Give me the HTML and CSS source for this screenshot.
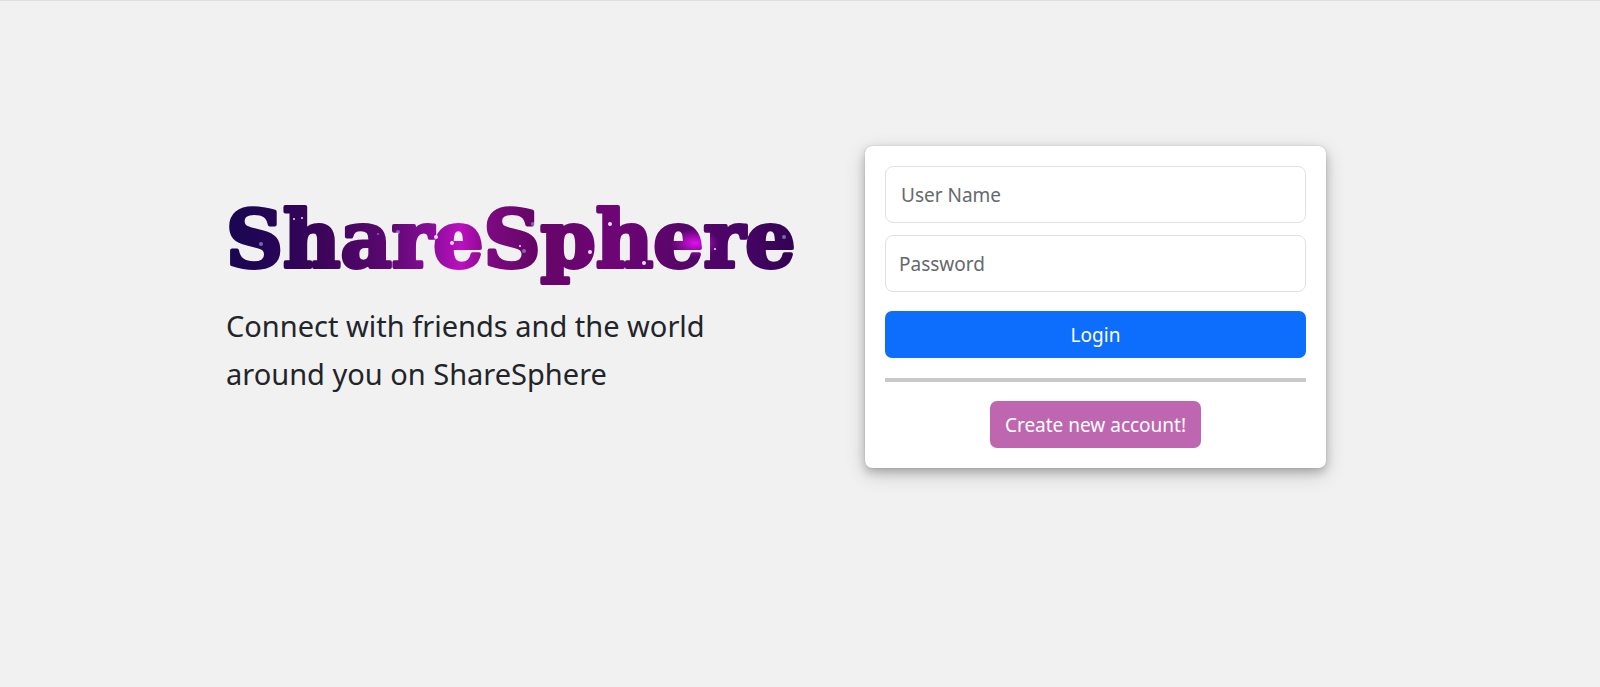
FILE: index.html
```html
<!DOCTYPE html>
<html lang="en">
<head>
  <meta charset="utf-8">
  <meta name="viewport" content="width=device-width, initial-scale=1">
  <title>ShareSphere</title>
  <link rel="stylesheet" href="styles.css">
</head>
<body>
  <main class="landing">
    <section class="intro">
      <h1 class="brand">
        <svg class="logo" viewBox="0 0 573 96" width="573" height="96">
          <defs>
            <linearGradient id="base" x1="0" y1="0" x2="1" y2="0">
              <stop offset="0" stop-color="#190650"/>
              <stop offset=".08" stop-color="#250557"/>
              <stop offset=".16" stop-color="#3a0458"/>
              <stop offset=".28" stop-color="#5a0870"/>
              <stop offset=".36" stop-color="#8a0c9a"/>
              <stop offset=".41" stop-color="#bc10c0"/>
              <stop offset=".46" stop-color="#7c0a80"/>
              <stop offset=".54" stop-color="#650567"/>
              <stop offset=".68" stop-color="#6e0576"/>
              <stop offset=".8" stop-color="#560568"/>
              <stop offset=".89" stop-color="#4a0468"/>
              <stop offset="1" stop-color="#2f0350"/>
            </linearGradient>
            <radialGradient id="glow">
              <stop offset="0" stop-color="#e010f0"/>
              <stop offset="1" stop-color="#e010f0" stop-opacity="0"/>
            </radialGradient>
            <pattern id="galaxy" patternUnits="userSpaceOnUse" width="573" height="96">
              <rect width="573" height="96" fill="url(#base)"/>
              <ellipse cx="469" cy="47" rx="24" ry="14" fill="url(#glow)"/>
              <g fill="#8d7fc0" opacity=".8">
                <circle cx="33" cy="55" r="2"/>
                <circle cx="35" cy="48" r="2"/>
                <circle cx="298" cy="55" r="2"/>
                <circle cx="307" cy="28" r="2"/>
                <circle cx="152" cy="38" r="1"/>
                <circle cx="172" cy="36" r="2"/>
                <circle cx="558" cy="41" r="2"/>
                <circle cx="551" cy="62" r="1"/>
              </g>
              <g fill="#f4d8fa">
                <circle cx="68" cy="23" r="1"/>
                <circle cx="76" cy="22" r="1"/>
                <circle cx="210" cy="41" r="2"/>
                <circle cx="226" cy="47" r="2"/>
                <circle cx="294" cy="50" r="1"/>
                <circle cx="364" cy="56" r="2"/>
                <circle cx="384" cy="28" r="2"/>
                <circle cx="418" cy="67" r="2"/>
                <circle cx="489" cy="53" r="1"/>
              </g>
            </pattern>
          </defs>
          <text class="logo-text" x="0" y="71" fill="url(#galaxy)" stroke="url(#galaxy)">ShareSphere</text>
        </svg>
      </h1>
      <p class="tagline">Connect with friends and the world around you on ShareSphere</p>
    </section>
    <section class="panel">
      <form class="card">
        <input class="field field-user" type="text" name="username" placeholder="User Name" aria-label="User Name">
        <input class="field" type="password" name="password" placeholder="Password" aria-label="Password">
        <button class="btn btn-login" type="submit">Login</button>
        <hr class="divider">
        <button class="btn btn-create" type="button">Create new account!</button>
      </form>
    </section>
  </main>
</body>
</html>
```
FILE: styles.css
```css
* {
  box-sizing: border-box;
}

body {
  margin: 0;
  border-top: 1px solid #dfdfdf;
  background: #f1f1f1;
  color: #212529;
  font-family: "Segoe UI", "Noto Sans", "Open Sans", sans-serif;
}

.landing {
  display: grid;
  grid-template-columns: minmax(0, 1fr) minmax(0, 1fr);
  max-width: 1320px;
  margin: 0 auto;
  padding: 145px 0 40px;
}

.intro {
  padding: 50px 0 0 86px;
}

.brand {
  margin: 0;
}

.logo {
  display: block;
  overflow: visible;
}

.logo-text {
  font-family: "DejaVu Serif", serif;
  font-size: 79px;
  font-weight: 700;
  stroke-width: 4px;
  stroke-linejoin: round;
}

.tagline {
  max-width: 520px;
  margin: 10px 0 0;
  font-size: 29px;
  line-height: 48px;
}

.panel {
  padding: 0 134px 0 65px;
}

.card {
  display: flex;
  flex-direction: column;
  padding: 20px;
  border-radius: 7px;
  background: #fff;
  box-shadow: 0 4px 8px rgba(0, 0, 0, 0.2), 0 6px 20px rgba(0, 0, 0, 0.19), 0 0 1px rgba(0, 0, 0, 0.3);
}

.field {
  width: 100%;
  height: 57px;
  margin-bottom: 12px;
  padding: 0 13px;
  border: 1px solid #dee2e6;
  border-radius: 8px;
  background: #fff;
  color: #212529;
  font: inherit;
  font-size: 19px;
}

.field-user {
  padding: 0 15px;
}

.field::placeholder {
  color: #65696d;
  opacity: 1;
}

.btn {
  height: 47px;
  padding: 0 15px;
  border: 0;
  border-radius: 7px;
  color: #fff;
  font: inherit;
  font-size: 19px;
  cursor: pointer;
}

.btn-login {
  margin-top: 7px;
  background: #0d6efd;
}

.divider {
  width: 100%;
  height: 4px;
  margin: 20px 0 19px;
  border: 0;
  background: #c8c9ca;
}

.btn-create {
  align-self: center;
  background: #be67b0;
}
```
